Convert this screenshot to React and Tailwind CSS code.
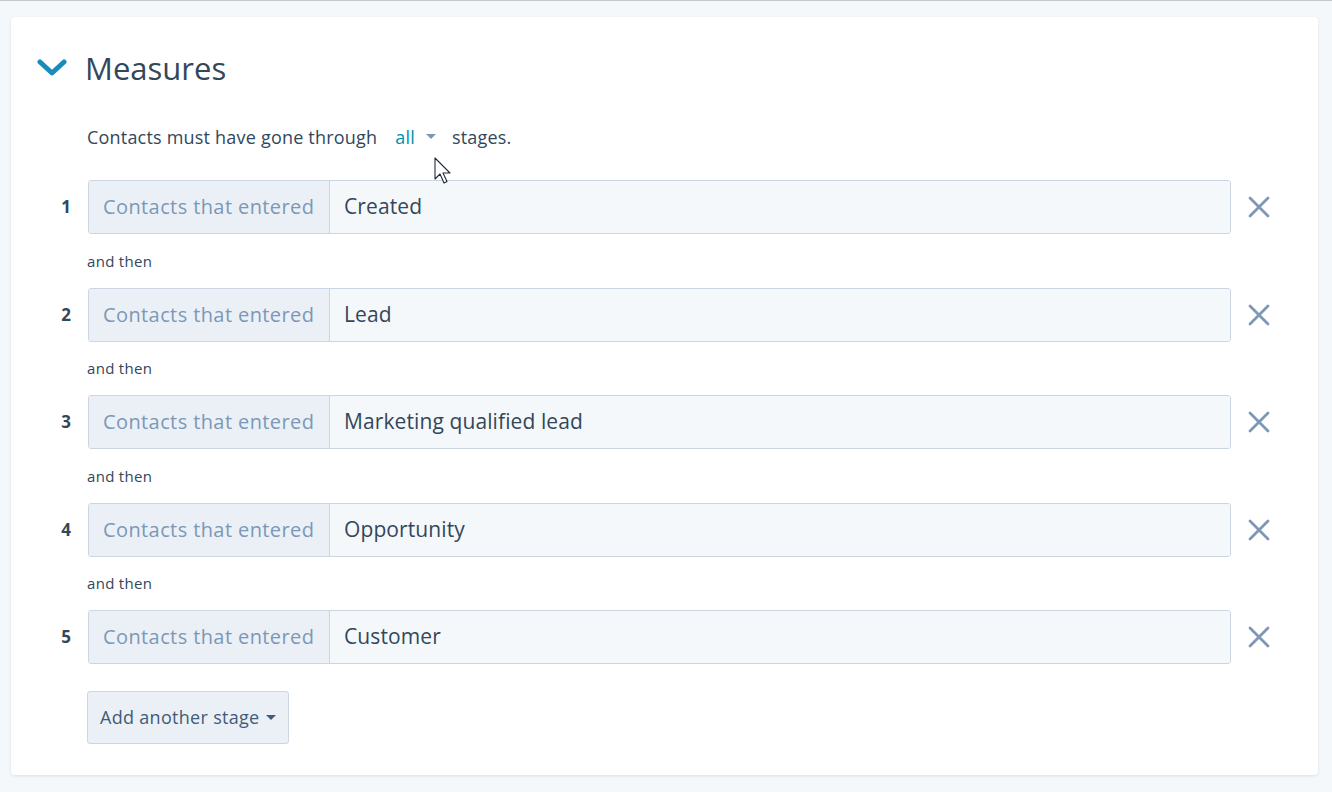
import React from 'react';

const stages = ['Created', 'Lead', 'Marketing qualified lead', 'Opportunity', 'Customer'];

function Chevron() {
  return (
    <svg width="30" height="18" viewBox="0 0 30 18" className="block">
      <path d="M3 3 L15 14 L27 3" fill="none" stroke="#1a8cbb" strokeWidth="5" strokeLinecap="round" strokeLinejoin="round" />
    </svg>
  );
}

function RemoveIcon() {
  return (
    <svg width="22" height="22" viewBox="0 0 22 22" className="block">
      <path d="M2 2 L20 20 M20 2 L2 20" stroke="#7c98b6" strokeWidth="2.8" strokeLinecap="round" />
    </svg>
  );
}

function Caret({ className }) {
  return (
    <svg width="10" height="6" viewBox="0 0 10 6" className={className}>
      <path d="M0 0 L10 0 L5 5 Z" fill="currentColor" />
    </svg>
  );
}

function Cursor() {
  // pointer cursor caught in the screenshot
  return (
    <svg width="20" height="30" viewBox="0 0 20 30" className="absolute left-[423px] top-[140px]">
      <path d="M1 1 L1 22 L6 17 L10 26 L13 24.5 L9 16 L16 16 Z" fill="white" stroke="#1e2a38" strokeWidth="1.1" strokeLinejoin="round" />
    </svg>
  );
}

function StageRow({ index, name }) {
  return (
    <div className="flex items-center h-[54px]">
      <span className="w-[37px] pr-[17px] text-right text-[17px] font-bold text-[#33475b]">{index}</span>
      <div className="flex flex-1 h-full border border-[#cbd6e2] rounded-[3px] overflow-hidden">
        <div className="w-[241px] shrink-0 bg-[#eaf0f6] border-r border-[#cbd6e2] flex items-center pl-[14px] text-[20px] tracking-[0.4px] text-[#7c98b6]">
          Contacts that entered
        </div>
        <div className="flex-1 bg-[#f5f8fa] flex items-center pl-[14px] text-[21px] tracking-[0.1px] text-[#33475b]">
          {name}
        </div>
      </div>
      <div className="w-[87px] flex items-center pl-[17px]">
        <RemoveIcon />
      </div>
    </div>
  );
}

export default function App() {
  return (
    <div className="min-h-[792px] bg-[#f5f8fa] border-t border-[#c4c9ce] pt-[16px] pl-[11px] font-['Open_Sans','Lato',sans-serif]">
      <div className="relative w-[1307px] h-[758px] bg-white rounded-[4px] shadow-[0_1px_3px_rgba(45,62,80,0.12)] pt-[33px]">
        <div className="flex items-center h-[36px] pl-[26px]">
          <Chevron />
          <h2 className="ml-[18px] text-[31px] leading-none text-[#33475b]">Measures</h2>
        </div>

        <div className="mt-[39px] pl-[76px] flex items-center h-[24px] text-[18px] tracking-[0.2px] text-[#33475b]">
          <span>Contacts must have gone through</span>
          <span className="ml-[18px] text-[#0091ae]">all</span>
          <Caret className="ml-[11px] text-[#7c98b6]" />
          <span className="ml-[16px]">stages.</span>
        </div>

        <Cursor />

        <div className="mt-[31px] pl-[40px]">
          {stages.map((name, i) => (
            <div key={name}>
              <StageRow index={i + 1} name={name} />
              {i < stages.length - 1 && (
                <div className="h-[53.5px] pl-[36px] flex items-center text-[15px] tracking-[0.3px] text-[#33475b]">
                  and then
                </div>
              )}
            </div>
          ))}
        </div>

        <div className="mt-[27px] pl-[76px]">
          <button className="h-[53px] pl-[12px] pr-[12px] flex items-center gap-[6px] bg-[#eaf0f6] border border-[#cbd6e2] rounded-[3px] text-[18px] tracking-[0.3px] text-[#425b76]">
            Add another stage
            <Caret className="text-[#425b76]" />
          </button>
        </div>
      </div>
    </div>
  );
}
